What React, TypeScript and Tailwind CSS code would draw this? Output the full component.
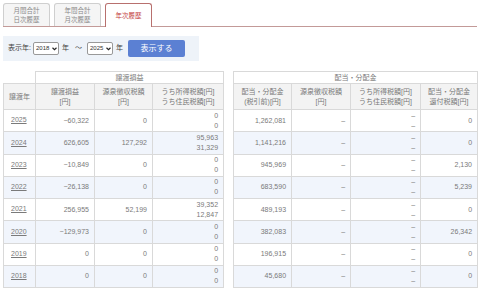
import React from 'react';

const font = { fontFamily: '"Liberation Sans", "Noto Sans CJK JP", sans-serif' };

type Row = {
  year: string;
  gain: string;
  withheld: string;
  tax: [string, string];
  div: string;
  divWithheld: string;
  divTax: [string, string];
  refund: string;
};

const rows: Row[] = [
  { year: '2025', gain: '−60,322', withheld: '0', tax: ['0', '0'], div: '1,262,081', divWithheld: '–', divTax: ['–', '–'], refund: '0' },
  { year: '2024', gain: '626,605', withheld: '127,292', tax: ['95,963', '31,329'], div: '1,141,216', divWithheld: '–', divTax: ['–', '–'], refund: '0' },
  { year: '2023', gain: '−10,849', withheld: '0', tax: ['0', '0'], div: '945,969', divWithheld: '–', divTax: ['–', '–'], refund: '2,130' },
  { year: '2022', gain: '−26,138', withheld: '0', tax: ['0', '0'], div: '683,590', divWithheld: '–', divTax: ['–', '–'], refund: '5,239' },
  { year: '2021', gain: '256,955', withheld: '52,199', tax: ['39,352', '12,847'], div: '489,193', divWithheld: '–', divTax: ['–', '–'], refund: '0' },
  { year: '2020', gain: '−129,973', withheld: '0', tax: ['0', '0'], div: '382,083', divWithheld: '–', divTax: ['–', '–'], refund: '26,342' },
  { year: '2019', gain: '0', withheld: '0', tax: ['0', '0'], div: '196,915', divWithheld: '–', divTax: ['–', '–'], refund: '0' },
  { year: '2018', gain: '0', withheld: '0', tax: ['0', '0'], div: '45,680', divWithheld: '–', divTax: ['–', '–'], refund: '0' },
];

const th = 'border border-[#d9d9d9] bg-[#f3f3f3] font-normal text-center leading-[10px] px-0';
const td = 'border border-[#d9d9d9] text-right px-[5px] leading-[10px]';

const Select = ({ value }: { value: string }) => (
  <div className="flex items-center justify-between w-[26px] h-[13px] border border-[#999] bg-white rounded-[2px] pl-[2px] pr-[1px] text-[6px] text-[#333]">
    <span>{value}</span>
    <svg width="5" height="4" viewBox="0 0 10 7">
      <path d="M1 1l4 4 4-4" fill="none" stroke="#222" strokeWidth="2.2" />
    </svg>
  </div>
);

const Tab = ({ lines, active }: { lines: string[]; active?: boolean }) => (
  <div
    className={
      active
        ? 'w-[47px] h-[24px] -mb-px flex flex-col items-center justify-center border border-b-0 border-[#b8706e] bg-white rounded-t-[3px] text-[6.5px] leading-[9px] text-[#c23a3a]'
        : 'w-[47px] h-[23px] flex flex-col items-center justify-center border border-b-0 border-[#cfcfcf] bg-[#f5f5f5] rounded-t-[3px] text-[6.5px] leading-[9px] text-[#888]'
    }
  >
    {lines.map((l) => (
      <span key={l}>{l}</span>
    ))}
  </div>
);

export default function App() {
  return (
    <div className="w-[480px] h-[291px] bg-white overflow-hidden px-[3px] pt-[3px]" style={font}>
      <div className="flex items-end gap-[4px] border-b border-[#c39a98] w-[474px]">
        <Tab lines={['月間合計', '日次履歴']} />
        <Tab lines={['年間合計', '月次履歴']} />
        <Tab lines={['年次履歴']} active />
      </div>

      <div className="mt-[9px] w-[196px] h-[25px] bg-[#eef3f9] flex items-center pl-[5px] text-[7px] text-[#444]">
        <span className="mr-[2px]">表示年:</span>
        <Select value="2018" />
        <span className="ml-[3px]">年</span>
        <span className="ml-[6px] mr-[5px]">～</span>
        <Select value="2025" />
        <span className="ml-[3px]">年</span>
        <button className="ml-[5px] w-[57px] h-[17px] rounded-[2px] bg-[#5b80d3] text-white text-[8px]">表示する</button>
      </div>

      <div className="mt-[10px] flex gap-[9px] text-[7px] text-[#7a7a7a]">
        <table className="border-collapse table-fixed w-[220px]">
          <colgroup>
            <col className="w-[32px]" />
            <col className="w-[59px]" />
            <col className="w-[58px]" />
            <col className="w-[71px]" />
          </colgroup>
          <thead>
            <tr className="h-[12px]">
              <th className="border-0" />
              <th colSpan={3} className="border border-[#d9d9d9] bg-white font-normal text-center leading-[10px]">譲渡損益</th>
            </tr>
            <tr className="h-[26px]">
              <th className={th}>譲渡年</th>
              <th className={th}>譲渡損益<br />[円]</th>
              <th className={th}>源泉徴収税額<br />[円]</th>
              <th className={th}>うち所得税額[円]<br />うち住民税額[円]</th>
            </tr>
          </thead>
          <tbody>
            {rows.map((r, i) => (
              <tr key={r.year} className={(i % 2 ? 'bg-[#f1f5fc] ' : 'bg-white ') + 'h-[22.25px]'}>
                <td className="border border-[#d9d9d9] pl-[7px] text-left">
                  <span className="underline">{r.year}</span>
                </td>
                <td className={td}>{r.gain}</td>
                <td className={td}>{r.withheld}</td>
                <td className={td}>
                  {r.tax[0]}
                  <br />
                  {r.tax[1]}
                </td>
              </tr>
            ))}
          </tbody>
        </table>

        <table className="border-collapse table-fixed w-[244px]">
          <colgroup>
            <col className="w-[58px]" />
            <col className="w-[59px]" />
            <col className="w-[70px]" />
            <col className="w-[57px]" />
          </colgroup>
          <thead>
            <tr className="h-[12px]">
              <th colSpan={4} className="border border-[#d9d9d9] bg-white font-normal text-center leading-[10px]">配当・分配金</th>
            </tr>
            <tr className="h-[26px]">
              <th className={th}>配当・分配金<br />(税引前)[円]</th>
              <th className={th}>源泉徴収税額<br />[円]</th>
              <th className={th}>うち所得税額[円]<br />うち住民税額[円]</th>
              <th className={th}>配当・分配金<br />還付税額[円]</th>
            </tr>
          </thead>
          <tbody>
            {rows.map((r, i) => (
              <tr key={r.year} className={(i % 2 ? 'bg-[#f1f5fc] ' : 'bg-white ') + 'h-[22.25px]'}>
                <td className={td}>{r.div}</td>
                <td className={td}>{r.divWithheld}</td>
                <td className={td}>
                  {r.divTax[0]}
                  <br />
                  {r.divTax[1]}
                </td>
                <td className={td}>{r.refund}</td>
              </tr>
            ))}
          </tbody>
        </table>
      </div>
    </div>
  );
}
